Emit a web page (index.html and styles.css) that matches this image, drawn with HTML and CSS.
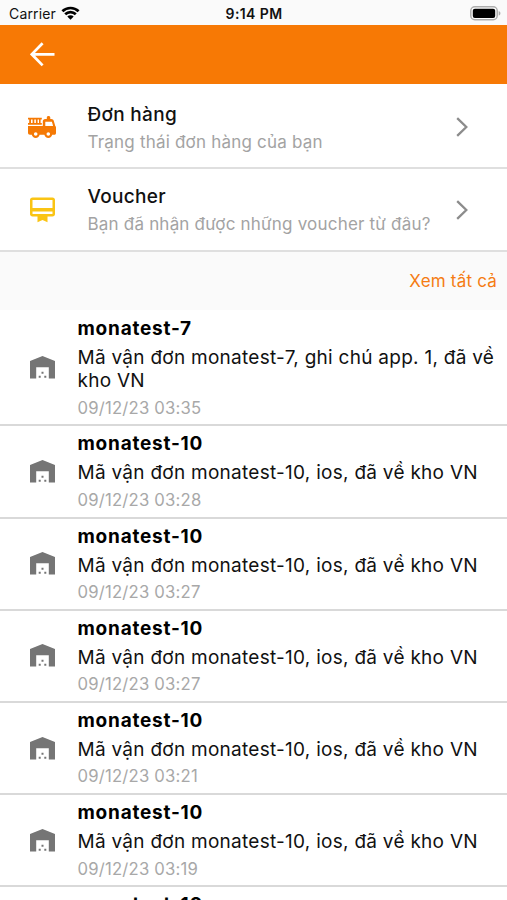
FILE: index.html
```html
<!DOCTYPE html>
<html lang="vi">
<head>
    <meta charset="UTF-8">
    <title>Thông báo</title>
    <link rel="stylesheet" href="styles.css">
</head>
<body>
    <svg class="icon-defs" width="0" height="0">
        <symbol id="warehouse" viewBox="0 0 25 23">
            <path fill="#757575" d="M0 22.5V5L12.5 0 25 5v17.5h-6.2V11.3H6.2v11.2z"/>
            <path fill="#757575" d="M11.5 15.8h2v2h-2zM8.7 19.8h2v2h-2zM14.3 19.8h2v2h-2z"/>
        </symbol>
        <symbol id="chevron" viewBox="0 0 12 20">
            <path d="M1.2 1.2 10.3 10l-9.1 8.8" fill="none" stroke="#8c8c8c" stroke-width="2.3"/>
        </symbol>
    </svg>

    <div class="status-bar">
        <div class="carrier">
            <span>Carrier</span>
            <svg width="19" height="14" viewBox="0 0 19 14">
                <path d="M1.4 5.3a11.6 11.6 0 0 1 16.2 0M4.2 8.2a7.6 7.6 0 0 1 10.6 0" fill="none" stroke="#000" stroke-width="2.7"/>
                <path d="M9.5 13.8 6.3 10.6a4.6 4.6 0 0 1 6.4 0z"/>
            </svg>
        </div>
        <div class="time">9:14 PM</div>
        <div class="battery">
            <svg width="31" height="15" viewBox="0 0 31 15">
                <rect x=".8" y=".8" width="26.4" height="12.9" rx="4" fill="#fff" stroke="#adadad" stroke-width="1.5"/>
                <rect x="2.8" y="2.7" width="22.4" height="9.2" rx="2"/>
                <path d="M28.7 5c2.3.8 2.3 3.8 0 4.6z" fill="#adadad"/>
            </svg>
        </div>
    </div>

    <div class="header">
        <svg width="25" height="25" viewBox="0 0 25 25">
            <path d="M24.5 12.3H2.3M12.6 1.2 1.8 12.3l10.8 11.1" fill="none" stroke="#fff" stroke-width="2.7"/>
        </svg>
    </div>

    <div class="menu">
        <div class="menu-item">
            <svg class="menu-icon" width="28" height="23" viewBox="0 0 28 23">
                <path fill="#f57904" fill-rule="evenodd" d="M0 1.8h13.8v1.8h-1.2V7h1.2v1.8H0V7h1.2V3.6H0zM3 3.6V7h1.6V3.6zm3.3 0V7h1.6V3.6zm3.3 0V7H11V3.6z"/>
                <path fill="#f57904" fill-rule="evenodd" d="M0 10h14.8V5.4c0-1.5 1-2.4 2.4-2.4h1.6V1.7C18.8.5 19.5 0 20.5 0S22.3.5 22.3 1.7V3h1c1.3 0 2.1.7 2.5 1.9l1.5 5c.3.3.7.8.7 1.5V17c0 1.2-.6 1.8-1.6 1.8h-2.2a4 4 0 0 1-7.8 0h-4.8a4 4 0 0 1-7.8 0H2c-1.3 0-2-.7-2-2zM17.3 5.7v4.2h7.8l-1.2-4.2zM7.7 16.2a1.8 1.8 0 1 0 0 3.6 1.8 1.8 0 0 0 0-3.6zm12.6 0a1.8 1.8 0 1 0 0 3.6 1.8 1.8 0 0 0 0-3.6z"/>
            </svg>
            <div class="menu-text">
                <div class="menu-title">Đơn hàng</div>
                <div class="menu-desc">Trạng thái đơn hàng của bạn</div>
            </div>
            <svg class="chevron" width="12" height="20"><use href="#chevron"/></svg>
        </div>
        <div class="menu-item">
            <svg class="menu-icon" width="28" height="26" viewBox="0 0 28 26">
                <path fill="#fac414" fill-rule="evenodd" d="M4.5.5h20C26 .5 27 1.5 27 2.9v14.2c0 1.5-1 2.5-2.5 2.5h-5v5.6l-5-2.3-5 2.3v-5.6h-5C3 19.6 2 18.6 2 17.1V2.9C2 1.5 3 .5 4.5.5zM4.5 2.9v8h20v-8zM4.5 14.5v2.6h20v-2.6z"/>
            </svg>
            <div class="menu-text">
                <div class="menu-title">Voucher</div>
                <div class="menu-desc">Bạn đã nhận được những voucher từ đâu?</div>
            </div>
            <svg class="chevron" width="12" height="20"><use href="#chevron"/></svg>
        </div>
    </div>

    <div class="see-all"><a>Xem tất cả</a></div>

    <div class="list">
        <div class="item">
            <svg class="item-icon" width="25" height="23"><use href="#warehouse"/></svg>
            <div class="item-text">
                <div class="item-title">monatest-7</div>
                <div class="item-body">Mã vận đơn monatest-7, ghi chú app. 1, đã về kho VN</div>
                <div class="item-date">09/12/23 03:35</div>
            </div>
        </div>
        <div class="item">
            <svg class="item-icon" width="25" height="23"><use href="#warehouse"/></svg>
            <div class="item-text">
                <div class="item-title">monatest-10</div>
                <div class="item-body">Mã vận đơn monatest-10, ios, đã về kho VN</div>
                <div class="item-date">09/12/23 03:28</div>
            </div>
        </div>
        <div class="item">
            <svg class="item-icon" width="25" height="23"><use href="#warehouse"/></svg>
            <div class="item-text">
                <div class="item-title">monatest-10</div>
                <div class="item-body">Mã vận đơn monatest-10, ios, đã về kho VN</div>
                <div class="item-date">09/12/23 03:27</div>
            </div>
        </div>
        <div class="item">
            <svg class="item-icon" width="25" height="23"><use href="#warehouse"/></svg>
            <div class="item-text">
                <div class="item-title">monatest-10</div>
                <div class="item-body">Mã vận đơn monatest-10, ios, đã về kho VN</div>
                <div class="item-date">09/12/23 03:27</div>
            </div>
        </div>
        <div class="item">
            <svg class="item-icon" width="25" height="23"><use href="#warehouse"/></svg>
            <div class="item-text">
                <div class="item-title">monatest-10</div>
                <div class="item-body">Mã vận đơn monatest-10, ios, đã về kho VN</div>
                <div class="item-date">09/12/23 03:21</div>
            </div>
        </div>
        <div class="item">
            <svg class="item-icon" width="25" height="23"><use href="#warehouse"/></svg>
            <div class="item-text">
                <div class="item-title">monatest-10</div>
                <div class="item-body">Mã vận đơn monatest-10, ios, đã về kho VN</div>
                <div class="item-date">09/12/23 03:19</div>
            </div>
        </div>
        <div class="item">
            <div class="item-text no-icon">
                <div class="item-title">monatest-10</div>
            </div>
        </div>
    </div>
</body>
</html>
```
FILE: styles.css
```css
* {
    box-sizing: border-box;
}
body {
    margin: 0;
    height: 900px;
    overflow: hidden;
    background: #fff;
    color: #111;
    font-family: Inter, "Liberation Sans", sans-serif;
}
svg {
    display: block;
    flex-shrink: 0;
}
.icon-defs {
    display: none;
}

/* status bar */
.status-bar {
    display: flex;
    height: 25px;
    padding: 2px 8px 0 9px;
    align-items: center;
    background: #fafafa;
    font-size: 14px;
    letter-spacing: 0.15px;
}
.carrier {
    display: flex;
    flex: 1;
    gap: 5px;
    align-items: center;
}
.carrier svg {
    margin-top: -2px;
}
.time {
    font-weight: 600;
    letter-spacing: 0.4px;
}
.battery {
    display: flex;
    flex: 1;
    justify-content: flex-end;
}
.battery svg {
    margin-right: -2px;
}

.header {
    display: flex;
    height: 59px;
    padding-left: 30px;
    align-items: center;
    background: #f77905;
}

/* shortcuts */
.menu-item {
    display: flex;
    height: 83px;
    padding: 0 39px 0 28px;
    align-items: center;
    border-bottom: 2px solid #dfdfdf;
}
.menu-item:first-child {
    height: 85px;
    padding-top: 3px;
}
.menu-text {
    flex: 1;
    margin-left: 31.5px;
    white-space: nowrap;
}
.menu-title {
    font-size: 19px;
    font-weight: 500;
    line-height: 26px;
    letter-spacing: 0.3px;
}
.menu-desc {
    padding-top: 3px;
    font-size: 17px;
    line-height: 22px;
    letter-spacing: 0.2px;
    color: #a3a3a3;
}

.see-all {
    height: 58px;
    padding: 17px 10px 0 0;
    background: #fafafa;
    color: #f57c13;
    font-size: 17px;
    line-height: 24px;
    letter-spacing: 0.2px;
    text-align: right;
}

/* notifications */
.item {
    display: flex;
    padding: 5px 0 5.2px 30px;
    align-items: center;
    border-bottom: 2px solid #d9d9d9;
}
.item:first-child {
    padding-top: 6px;
}
.item-text {
    margin-left: 22.5px;
    flex: 1;
}
.no-icon {
    margin-left: 47.5px;
}
.item-title {
    font-size: 19px;
    font-weight: 700;
    line-height: 26px;
    letter-spacing: 0.77px;
    color: #000;
}
.item-body {
    padding-top: 4px;
    font-size: 19px;
    line-height: 23.3px;
    letter-spacing: 0.27px;
}
.item-date {
    padding-top: 4px;
    font-size: 16.7px;
    line-height: 22.7px;
    letter-spacing: 0.2px;
    color: #a8a8a8;
}
```
